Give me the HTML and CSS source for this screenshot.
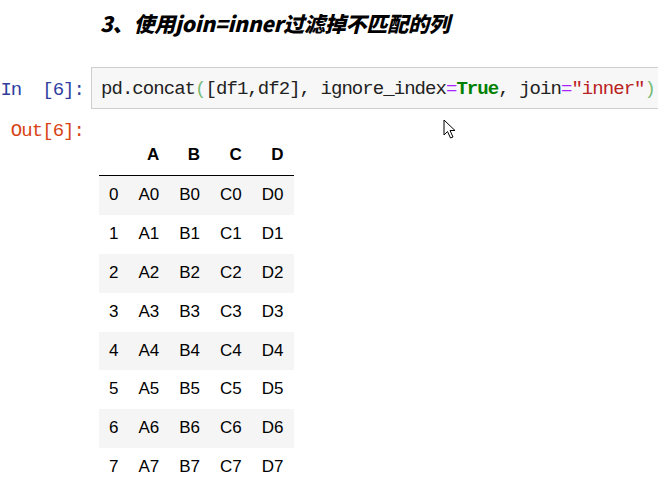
FILE: index.html
```html
<!DOCTYPE html>
<html lang="zh">
<head>
<meta charset="utf-8">
<link rel="stylesheet" href="styles.css">
</head>
<body>
<div class="page">
  <h3 class="heading">3、使用join=inner过滤掉不匹配的列</h3>
  <div class="cell-in">
    <div class="prompt in">In&nbsp;&nbsp;[6]:</div>
    <div class="code"><span class="tx">pd.concat</span><span class="br">(</span><span class="tx">[df1,df2],</span> <span class="tx">ignore_index</span><span class="op">=</span><span class="kw">True</span><span class="tx">,</span> <span class="tx">join</span><span class="op">=</span><span class="str">"inner"</span><span class="br">)</span></div>
  </div>
  <div class="cell-out">
    <div class="prompt out">Out[6]:</div>
    <table class="df">
      <thead>
        <tr><th></th><th>A</th><th>B</th><th>C</th><th>D</th></tr>
      </thead>
      <tbody>
        <tr><td class="idx">0</td><td>A0</td><td>B0</td><td>C0</td><td>D0</td></tr>
        <tr><td class="idx">1</td><td>A1</td><td>B1</td><td>C1</td><td>D1</td></tr>
        <tr><td class="idx">2</td><td>A2</td><td>B2</td><td>C2</td><td>D2</td></tr>
        <tr><td class="idx">3</td><td>A3</td><td>B3</td><td>C3</td><td>D3</td></tr>
        <tr><td class="idx">4</td><td>A4</td><td>B4</td><td>C4</td><td>D4</td></tr>
        <tr><td class="idx">5</td><td>A5</td><td>B5</td><td>C5</td><td>D5</td></tr>
        <tr><td class="idx">6</td><td>A6</td><td>B6</td><td>C6</td><td>D6</td></tr>
        <tr><td class="idx">7</td><td>A7</td><td>B7</td><td>C7</td><td>D7</td></tr>
      </tbody>
    </table>
  </div>
  <svg class="cursor" width="15" height="20" viewBox="0 0 15 20"><path d="M1 1 L1 16 L4.5 12.5 L7.5 19 L10 18 L7 11.5 L12 11.5 Z" fill="#fff" stroke="#000" stroke-width="1" stroke-linejoin="miter"/></svg>
</div>
</body>
</html>
```

FILE: styles.css
```css
html, body {
  margin: 0;
  padding: 0;
  background: #fff;
  overflow: hidden;
}
.page {
  position: relative;
  width: 658px;
  height: 483px;
  overflow: hidden;
}
.heading {
  margin: 0;
  height: 46px;
  line-height: 46px;
  padding-left: 100px;
  font-family: "Noto Sans CJK SC", "Noto Sans", sans-serif;
  font-size: 21px;
  font-weight: 900;
  font-style: italic;
  color: #000;
  letter-spacing: -0.2px;
}
.cell-in {
  display: flex;
  align-items: stretch;
  margin-top: 21px;
  height: 42px;
}
.prompt {
  font-family: "Liberation Mono", monospace;
  font-size: 19px;
  letter-spacing: -0.95px;
  width: 84px;
  text-align: right;
  flex: none;
  white-space: pre;
}
.prompt.in {
  color: #303f9f;
  line-height: 42px;
  padding-top: 2px;
  box-sizing: border-box;
  width: 84px;
  margin-right: 7px;
}
.code {
  flex: none;
  width: 600px;
  box-sizing: border-box;
  border: 1px solid #cfcfcf;
  background: #f7f7f7;
  padding-left: 9px;
  padding-top: 2px;
  line-height: 38px;
  font-family: "Liberation Mono", monospace;
  font-size: 19px;
  letter-spacing: -0.95px;
  white-space: pre;
  color: #222;
}
.tx { color: #222; }
.br { color: #77bb77; }
.op { color: #aa22ff; }
.kw { color: #008000; font-weight: bold; }
.str { color: #ba2121; }
.cell-out {
  display: flex;
  align-items: flex-start;
}
.prompt.out {
  color: #d84315;
  line-height: 20px;
  padding-top: 12px;
  width: 84px;
  margin-right: 15px;
}
.df {
  margin-top: 27px;
  border-collapse: collapse;
  border-spacing: 0;
  font-family: "Liberation Sans", Arial, sans-serif;
  font-size: 17px;
  color: #000;
}
.df th, .df td {
  padding: 10px 10px;
  line-height: 18.9px;
  text-align: right;
  vertical-align: middle;
}
.df thead th {
  font-weight: bold;
  border-bottom: 1px solid #000;
}
.df tbody tr:nth-child(odd) {
  background: #f5f5f5;
}
.cursor {
  position: absolute;
  left: 443px;
  top: 119px;
}
```
